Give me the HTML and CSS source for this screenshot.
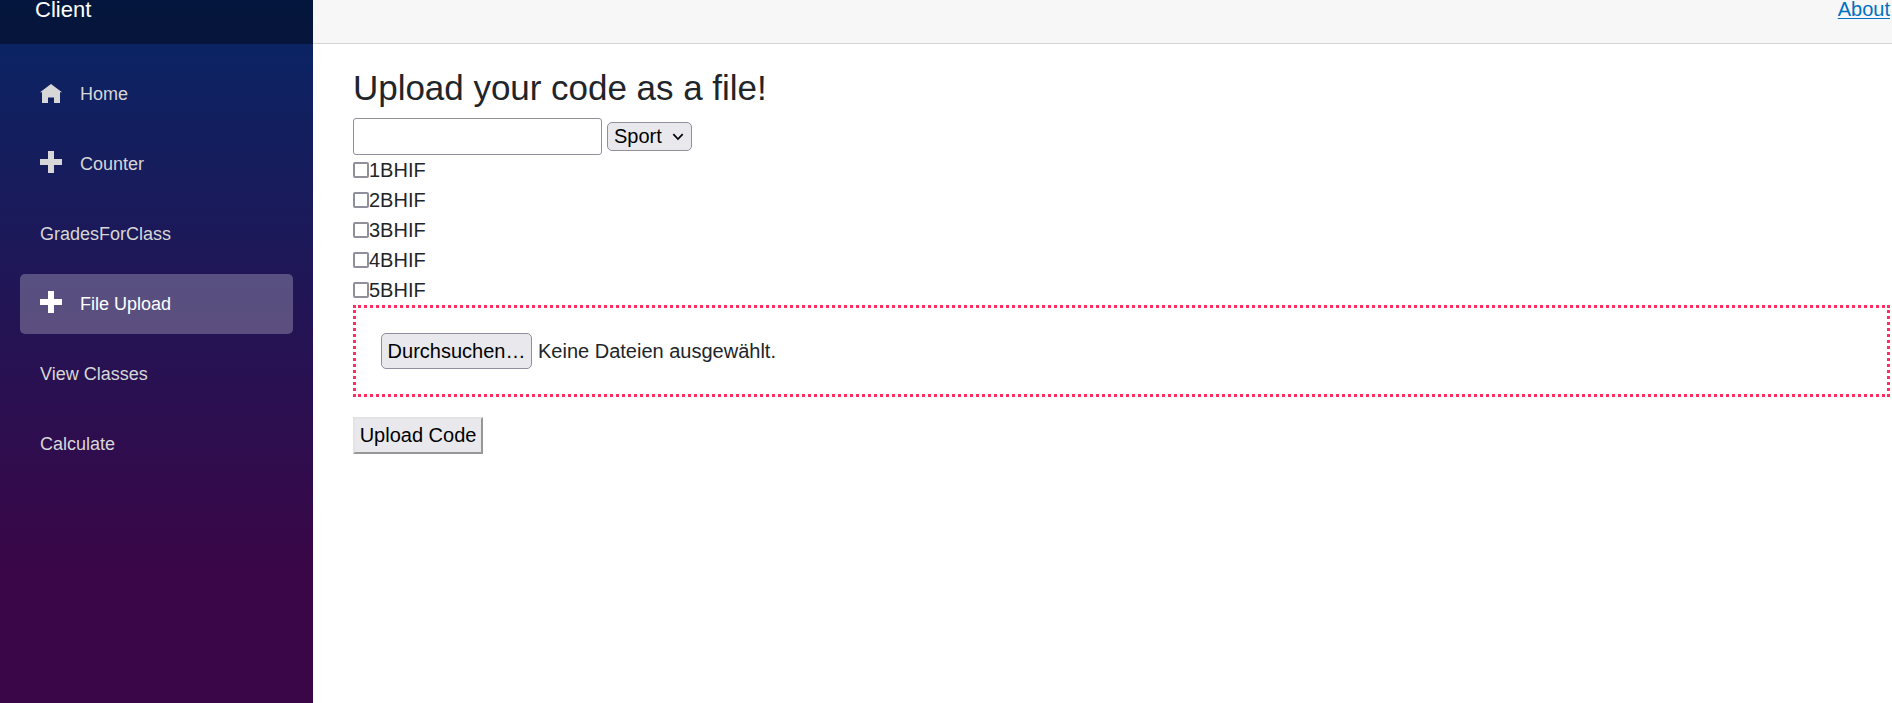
FILE: index.html
```html
<!DOCTYPE html>
<html lang="de">
<head>
<meta charset="utf-8">
<title>Client</title>
<link rel="stylesheet" href="styles.css">
</head>
<body>
<div class="page">
  <aside class="sidebar">
    <div class="brand">Client</div>
    <nav class="nav">
      <a class="nav-link"><span class="icon"><svg class="home" width="22" height="19" viewBox="0 0 22 19"><path fill="currentColor" d="M11 0 0 8.2h2V19h6v-5.5h6V19h6V8.2h2z"/></svg></span>Home</a>
      <a class="nav-link"><span class="icon"><svg class="plus" width="22" height="22" viewBox="0 0 22 22"><path fill="currentColor" d="M8 0h6v8h8v6h-8v8H8v-8H0V8h8z"/></svg></span>Counter</a>
      <a class="nav-link">GradesForClass</a>
      <a class="nav-link active"><span class="icon"><svg class="plus" width="22" height="22" viewBox="0 0 22 22"><path fill="currentColor" d="M8 0h6v8h8v6h-8v8H8v-8H0V8h8z"/></svg></span>File Upload</a>
      <a class="nav-link">View Classes</a>
      <a class="nav-link">Calculate</a>
    </nav>
  </aside>
  <div class="main">
    <header class="top-row"><a class="about" href="#">About</a></header>
    <main class="content">
      <h3 class="title">Upload your code as a file!</h3>
      <div class="fields">
        <input class="name" type="text">
        <div class="select">Sport<svg class="chevron" width="12" height="8" viewBox="0 0 12 8"><path d="M1.3 1.2 6 6l4.7-4.8" fill="none" stroke="#000" stroke-width="1.7"/></svg></div>
      </div>
      <label class="check"><input type="checkbox">1BHIF</label>
      <label class="check"><input type="checkbox">2BHIF</label>
      <label class="check"><input type="checkbox">3BHIF</label>
      <label class="check"><input type="checkbox">4BHIF</label>
      <label class="check"><input type="checkbox">5BHIF</label>
      <div class="dropzone"><button class="browse">Durchsuchen…</button><span>Keine Dateien ausgewählt.</span></div>
      <button class="upload">Upload Code</button>
    </main>
  </div>
</div>
</body>
</html>
```
FILE: styles.css
```css
* { box-sizing: border-box; }
body {
  margin: 0;
  font: 20px/30px "Liberation Sans", Arial, sans-serif;
  color: #212529;
  background: #fff;
}
.page { display: flex; height: 703px; }
.sidebar {
  flex: 0 0 313px;
  background: linear-gradient(180deg, rgb(5, 39, 103) -26px, #3a0647 576px);
}
.brand {
  height: 44px;
  padding-left: 35px;
  background: rgba(0, 0, 0, .4);
  color: #fff;
  font-size: 22px;
  line-height: 19px;
}
.nav { display: flex; flex-direction: column; gap: 10px; padding: 20px; }
.nav-link {
  display: flex;
  align-items: center;
  height: 60px;
  padding: 0 20px;
  border-radius: 5px;
  color: #d7d7d7;
  font-size: 18px;
}
.nav-link.active { background: rgba(255, 255, 255, .25); color: #fff; }
.icon { display: flex; width: 40px; }
.home { margin-bottom: 1px; }
.plus { margin-bottom: 4px; }
.main { flex: 1; min-width: 0; }
.top-row {
  display: flex;
  justify-content: flex-end;
  height: 44px;
  padding-right: 2px;
  background: #f7f7f7;
  border-bottom: 1px solid #d6d5d5;
}
.about {
  height: 18px;
  line-height: 18px;
  color: #0071c1;
  text-underline-offset: 2px;
  text-decoration-thickness: 1px;
}
.content { padding: 23px 2px 0 40px; }
.title {
  margin: 0 0 9px;
  font-size: 35px;
  font-weight: 400;
  line-height: 42px;
  letter-spacing: -.03px;
}
.fields { display: flex; align-items: center; gap: 5px; height: 37px; }
.name {
  width: 249px;
  height: 37px;
  border: 1px solid #8f8f9d;
  border-radius: 3px;
  font: inherit;
}
.select {
  display: flex;
  align-items: center;
  justify-content: space-between;
  width: 85px;
  height: 29px;
  padding: 0 7px 2px 6px;
  border: 1px solid #8f8f9d;
  border-radius: 5px;
  background: #e9e9ed;
  color: #000;
}
.chevron { margin-top: 3px; }
.check { display: flex; align-items: center; height: 30px; }
.check input {
  appearance: none;
  width: 16px;
  height: 16px;
  margin: 0;
  border: 2px solid #8f8f9d;
  border-radius: 2px;
  background: #fff;
}
.dropzone {
  display: flex;
  align-items: center;
  gap: 6px;
  height: 92px;
  margin-bottom: 20px;
  padding: 25px;
  border: 3px dotted #ff2d60;
}
.browse {
  width: 151px;
  height: 36px;
  padding: 0;
  border: 1px solid #8f8f9d;
  border-radius: 5px;
  background: #e9e9ed;
  color: #000;
  font: inherit;
}
.upload {
  display: block;
  width: 130px;
  height: 37px;
  padding: 0 0 2px;
  border: 2px solid;
  border-color: #e3e3e3 #979797 #979797 #e3e3e3;
  background: #e9e9ed;
  color: #000;
  font: inherit;
}
```
